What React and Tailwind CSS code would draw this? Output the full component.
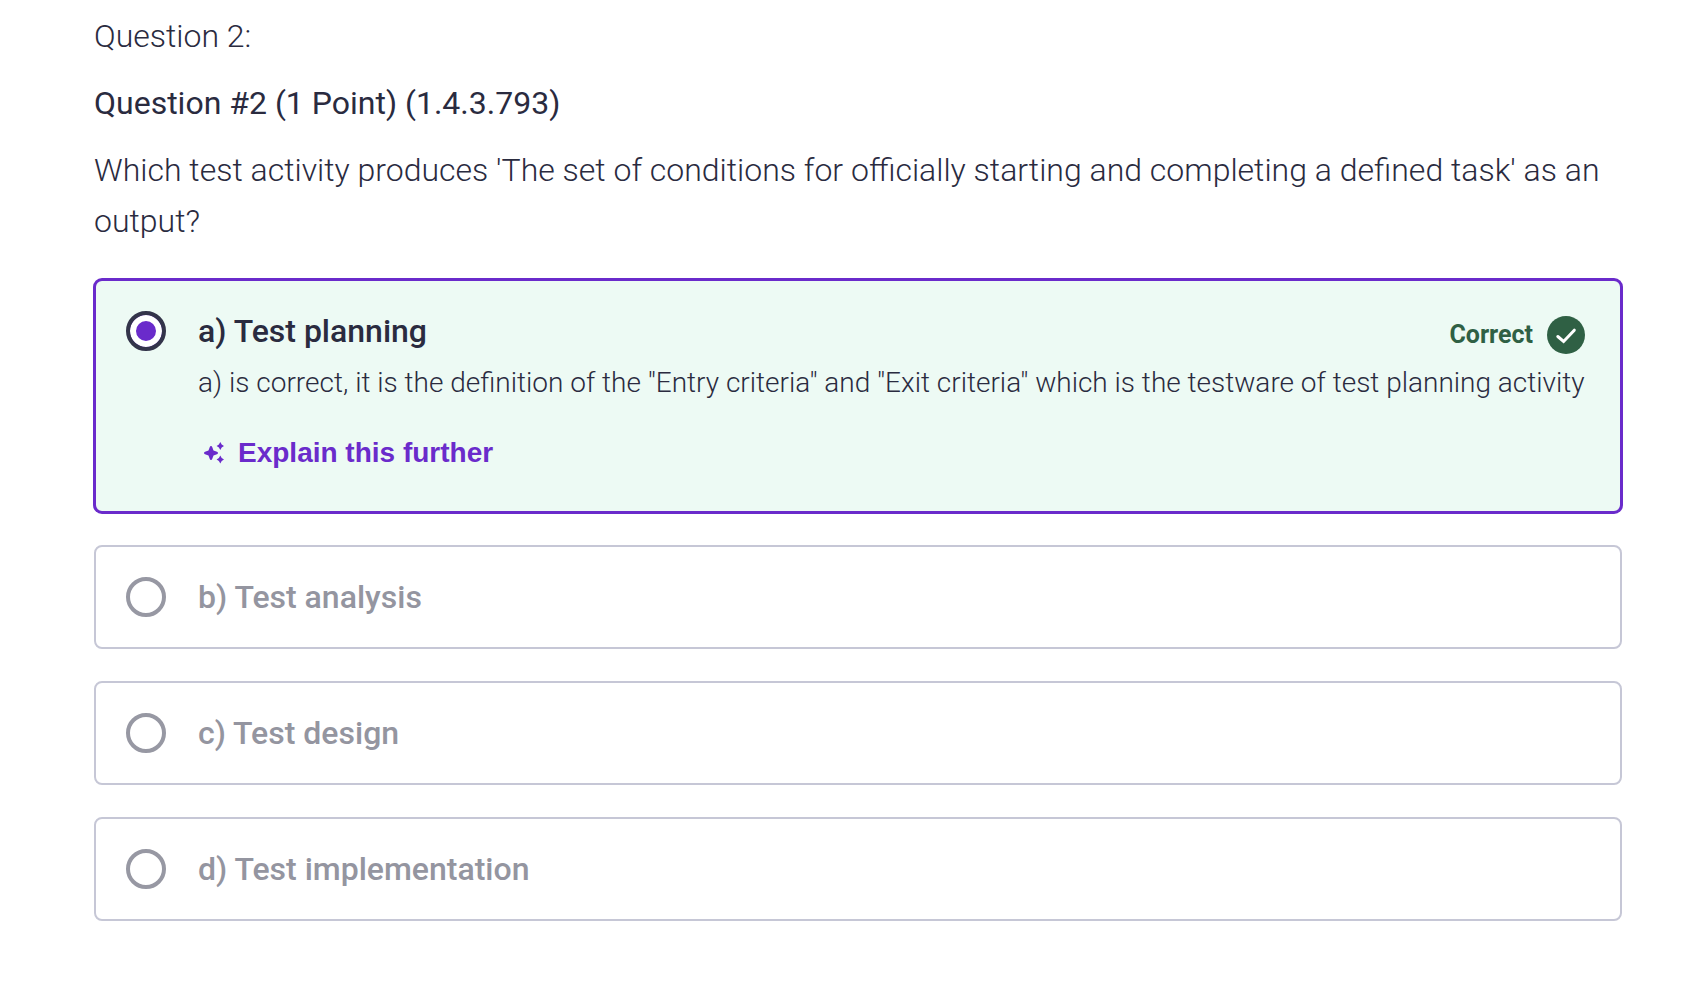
import React, { useState } from "react";

const answers = [
  { id: "a", text: "a) Test planning" },
  { id: "b", text: "b) Test analysis" },
  { id: "c", text: "c) Test design" },
  { id: "d", text: "d) Test implementation" },
];

const correctId = "a";

const SparkleIcon = () => (
  <svg width="20" height="22" viewBox="0 0 20 22" fill="currentColor" aria-hidden="true">
    <path d="M7 4c.6 0 1 .4 1.200 1l1.300 3.500 3.500 1.300c.6.2 1 .6 1 1.200s-.4 1-1 1.200l-3.500 1.300L8.200 17c-.2.6-.6 1-1.200 1s-1-.4-1.200-1l-1.300-3.500L1 12.200c-.6-.2-1-.6-1-1.200s.4-1 1-1.200l3.500-1.300L5.800 5C6 4.400 6.400 4 7 4z" />
    <path d="M16.300 0l1.400 2.600 2.300 1.400-2.300 1.400-1.400 2.600-1.400-2.600L12.600 4l2.300-1.400z" />
    <path d="M16.300 13.500l1.400 2.600 2.300 1.400-2.300 1.400-1.400 2.600-1.400-2.600-2.300-1.400 2.300-1.400z" />
  </svg>
);

const CorrectBadge = () => (
  <div className="flex items-center gap-3.5 text-[#2f6044]">
    <span className="text-[25px] leading-8 font-bold">Correct</span>
    <svg width="38" height="38" viewBox="0 0 38 38" aria-hidden="true">
      <circle cx="19" cy="19" r="19" fill="currentColor" />
      <path
        d="M10.800 20.500l5.800 5L27.300 14.200"
        fill="none"
        stroke="#ffffff"
        strokeWidth="3"
        strokeLinecap="round"
      />
    </svg>
  </div>
);

const App = () => {
  const [selected, setSelected] = useState("a");

  return (
    <main className="min-h-screen bg-white pt-[11px] pb-16 pl-[94px] pr-[70px] font-['Roboto',sans-serif] text-[#2a2b3f]">
      {/* Question */}
      <div className="flex flex-col gap-4 text-[32px] leading-[51px] font-light">
        <p>Question 2:</p>
        <h1 className="font-normal">Question #2 (1 Point) (1.4.3.793)</h1>
        <p id="question-text">
          Which test activity produces 'The set of conditions for officially
          starting and completing a defined task' as an output?
        </p>
      </div>

      {/* Answers */}
      <div role="radiogroup" aria-labelledby="question-text" className="mt-8 flex flex-col gap-8">
        {answers.map((answer) => {
          const isCorrect = answer.id === correctId;

          return (
            <div
              key={answer.id}
              className={
                isCorrect
                  ? "flex gap-8 rounded-lg border-2 border-[#6a2bcb] bg-[#edfaf4] p-[30px] ring-1 ring-[#6a2bcb]"
                  : "flex gap-8 rounded-lg border-2 border-[#c6c7d6] p-[30px]"
              }
            >
              <input
                type="radio"
                id={`answer-${answer.id}`}
                name="answer"
                checked={selected === answer.id}
                disabled={!isCorrect}
                onChange={() => setSelected(answer.id)}
                className="size-10 shrink-0 appearance-none rounded-full border-4 border-[#33344a] bg-white checked:bg-[#6a2bcb] checked:shadow-[inset_0_0_0_6px_#ffffff] disabled:border-[#9798a3]"
              />
              <div className="min-w-0 flex-1">
                <div className="flex items-start justify-between">
                  <label
                    htmlFor={`answer-${answer.id}`}
                    className={
                      isCorrect
                        ? "text-[32px] leading-10 font-medium"
                        : "text-[32px] leading-10 font-medium text-[#9495a0]"
                    }
                  >
                    {answer.text}
                  </label>
                  {isCorrect && (
                    <div className="pt-[5px] pr-[5px]">
                      <CorrectBadge />
                    </div>
                  )}
                </div>

                {isCorrect && (
                  <>
                    <p className="mt-2 text-[28px] leading-[42px] font-light">
                      a) is correct, it is the definition of the "Entry
                      criteria" and "Exit criteria" which is the testware of
                      test planning activity
                    </p>
                    <button
                      type="button"
                      className="mt-[21px] flex h-14 items-center gap-3.5 px-1.5 font-['Liberation_Sans',Arial,sans-serif] text-[28px] font-bold text-[#6a2bcb]"
                    >
                      <SparkleIcon />
                      Explain this further
                    </button>
                  </>
                )}
              </div>
            </div>
          );
        })}
      </div>
    </main>
  );
};

export default App;
